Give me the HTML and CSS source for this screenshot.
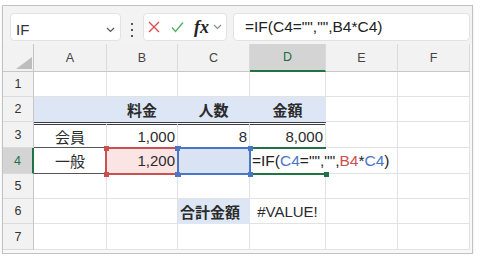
FILE: index.html
```html
<!DOCTYPE html>
<html lang="ja">
<head>
	<meta charset="UTF-8">
	<title>IF関数</title>
	<link rel="stylesheet" href="styles.css">
</head>
<body>
	<div class="window">
		<div class="formula-bar">
			<div class="name-box">
				<span>IF</span>
				<svg class="chev" width="9" height="6" viewBox="0 0 9 6"><path d="M1 1L4.5 4.5L8 1" fill="none" stroke="#555" stroke-width="1.2"/></svg>
			</div>
			<div class="dots"><i></i><i></i><i></i></div>
			<div class="fx-box">
				<svg class="icon" width="12" height="12" viewBox="0 0 12 12"><path d="M1 1L11 11M11 1L1 11" stroke="#e0474c" stroke-width="1.3" fill="none"/></svg>
				<svg class="icon ok" width="13" height="12" viewBox="0 0 13 12"><path d="M1 6.5L4.5 10.5L12 1.5" stroke="#4fae5f" stroke-width="1.3" fill="none"/></svg>
				<span class="fx">fx</span>
				<svg class="chev small" width="9" height="6" viewBox="0 0 9 6"><path d="M1 1L4.5 4.5L8 1" fill="none" stroke="#888" stroke-width="1.1"/></svg>
			</div>
			<div class="formula-input">=IF(C4="","",B4*C4)</div>
		</div>

		<div class="sheet">
			<!-- 列見出し -->
			<div class="corner">
				<svg width="30" height="27" viewBox="0 0 30 27"><polygon points="13,25 29,25 29,13" fill="#bdbdbd"/></svg>
			</div>
			<div class="hd">A</div>
			<div class="hd">B</div>
			<div class="hd">C</div>
			<div class="hd active">D</div>
			<div class="hd">E</div>
			<div class="hd">F</div>

			<!-- 1 -->
			<div class="rh">1</div>
			<div class="c"></div><div class="c"></div><div class="c"></div><div class="c"></div><div class="c"></div><div class="c"></div>

			<!-- 2 -->
			<div class="rh">2</div>
			<div class="c band"></div>
			<div class="c band bold ctr">料金</div>
			<div class="c band bold ctr">人数</div>
			<div class="c band bold ctr">金額</div>
			<div class="c"></div><div class="c"></div>

			<!-- 3 -->
			<div class="rh">3</div>
			<div class="c dtop ctr dark-bottom">会員</div>
			<div class="c dtop num">1,000</div>
			<div class="c dtop num">8</div>
			<div class="c dtop num">8,000</div>
			<div class="c"></div><div class="c"></div>

			<!-- 4 -->
			<div class="rh active">4</div>
			<div class="c ctr dark-bottom">一般</div>
			<div class="c num ref-red">1,200</div>
			<div class="c ref-blue"></div>
			<div class="c edit"><span>=IF(<span class="r-blue">C4</span>="","",<span class="r-red">B4</span>*<span class="r-blue">C4</span>)</span><i class="caret"></i></div>
			<div class="c"></div><div class="c"></div>

			<!-- 5 -->
			<div class="rh">5</div>
			<div class="c"></div><div class="c"></div><div class="c"></div><div class="c"></div><div class="c"></div><div class="c"></div>

			<!-- 6 -->
			<div class="rh">6</div>
			<div class="c"></div>
			<div class="c"></div>
			<div class="c band bold total">合計金額</div>
			<div class="c ctr">#VALUE!</div>
			<div class="c"></div><div class="c"></div>

			<!-- 7 -->
			<div class="rh">7</div>
			<div class="c"></div><div class="c"></div><div class="c"></div><div class="c"></div><div class="c"></div><div class="c"></div>
		</div>
	</div>
</body>
</html>
```

FILE: styles.css
```css
*{margin: 0;padding: 0;box-sizing: border-box;}
body{
	background: #fff;
	font-family: "Liberation Sans", "Noto Sans CJK JP", sans-serif;
	color: #2b2b2b;
}
.window{
	width: 471px;
	height: 249px;
	margin: 5px 0 0 2px;
	border: 1px solid #c3c3c3;
	background: #f8f8f8;
	box-shadow: 0 1px 2px rgba(0, 0, 0, .12);
}

/* 数式バー */
.formula-bar{
	height: 38px;
	background: #f3f3f3;
	display: flex;
	align-items: flex-start;
	padding: 7px 0 0 7px;
}
.name-box{
	width: 111px;
	height: 28px;
	background: #fff;
	border: 1px solid #e2e2e2;
	border-radius: 4px;
	display: flex;
	align-items: center;
	justify-content: space-between;
	padding: 5px 5px 0 5px;
	font-size: 15px;
	color: #333;
}
.dots{
	width: 2px;
	margin: 10px 10px 0;
	display: flex;
	flex-direction: column;
	gap: 4px;
}
.dots i{
	display: block;
	width: 2px;
	height: 2px;
	background: #555;
}
.fx-box{
	width: 84px;
	height: 28px;
	background: #fff;
	border: 1px solid #e2e2e2;
	border-radius: 4px;
	display: flex;
	align-items: center;
	padding-left: 4px;
}
.fx-box .ok{margin-left: 11px;}
.fx{
	margin-left: 10px;
	font: italic bold 18px "Liberation Serif", serif;
	color: #222;
}
.chev.small{margin-left: 4px;}
.formula-input{
	width: 237px;
	height: 28px;
	margin-left: 6px;
	background: #fff;
	border: 1px solid #e2e2e2;
	border-radius: 4px;
	display: flex;
	align-items: center;
	padding-left: 11px;
	font-size: 15.5px;
	color: #222;
}

/* シート */
.sheet{
	display: grid;
	grid-template-columns: 31px 73px 71px 72px 76px 72px 72px;
	grid-template-rows: 28px 25px 25px 26px 26px 25px 25px 26px;
	width: 467px;
	background: #fff;
}
.corner{
	background: #f2f2f2;
	border-right: 1px solid #c6c6c6;
	border-bottom: 1px solid #c6c6c6;
}
.corner svg{display: block;}
.hd{
	background: #f2f2f2;
	border-right: 1px solid #dadada;
	border-bottom: 1px solid #c6c6c6;
	display: flex;
	align-items: center;
	justify-content: center;
	font-size: 12.5px;
	color: #444;
}
.hd.active{
	background: #d4d4d4;
	color: #226b40;
	border-bottom: 2px solid #217346;
}
.rh{
	background: #f2f2f2;
	border-right: 1px solid #c6c6c6;
	border-bottom: 1px solid #dadada;
	display: flex;
	align-items: center;
	justify-content: center;
	font-size: 12.5px;
	color: #333;
}
.rh.active{
	background: #d4d4d4;
	color: #217346;
	border-right: 2px solid #217346;
}
.c{
	position: relative;
	border-right: 1px solid #e2e2e2;
	border-bottom: 1px solid #e2e2e2;
	display: flex;
	align-items: center;
	padding: 0 2px;
	font-size: 15px;
	white-space: nowrap;
}
.num{justify-content: flex-end;}
.ctr{justify-content: center;}
.bold{font-weight: bold;}
.band{
	background: #dce6f4;
	border-right-color: transparent;
	border-bottom-color: transparent;
}
.dtop{border-top: 3px double #3a3a3a;}
.dark-bottom{border-bottom-color: #555;}
.total{padding-left: 2px;}

/* 参照セルの枠 */
.ref-red{
	background: #fbe4e4;
	z-index: 1;
}
.ref-red::before{
	content: "";
	position: absolute;
	left: -2px;
	top: -1px;
	right: -2px;
	bottom: -2px;
	border: 2px solid #c9504f;
}
.ref-red::after{
	content: "";
	position: absolute;
	left: -3px;
	top: -2px;
	width: 5px;
	height: 5px;
	background: #c9504f;
	box-shadow: 0 26px 0 #c9504f, 72px 0 0 #c9504f, 72px 26px 0 #c9504f;
}
.ref-blue{
	background: #dae3f3;
	z-index: 3;
}
.ref-blue::before{
	content: "";
	position: absolute;
	left: -1px;
	top: -1px;
	right: -2px;
	bottom: -2px;
	border: 2px solid #4a76c6;
}
.ref-blue::after{
	content: "";
	position: absolute;
	left: -3px;
	top: -2px;
	width: 5px;
	height: 5px;
	background: #4a76c6;
	box-shadow: 0 26px 0 #4a76c6, 73px 0 0 #4a76c6, 73px 26px 0 #4a76c6;
}
.r-blue{color: #4a76c6;}
.r-red{color: #c9504f;}

/* 編集中のセル */
.edit{
	z-index: 2;
	border-right-color: transparent;
	padding-left: 2px;
	overflow: visible;
	font-size: 15.5px;
	color: #222;
}
.edit::before{
	content: "";
	position: absolute;
	left: 0;
	top: -1px;
	right: -1px;
	bottom: -2px;
	border-top: 2px solid #217346;
	border-bottom: 2px solid #217346;
}
.edit::after{
	content: "";
	position: absolute;
	left: 74px;
	top: 24px;
	width: 5px;
	height: 5px;
	background: #217346;
}
.caret{
	display: inline-block;
	width: 1px;
	height: 22px;
	margin-left: 1px;
	background: #333;
}
```
